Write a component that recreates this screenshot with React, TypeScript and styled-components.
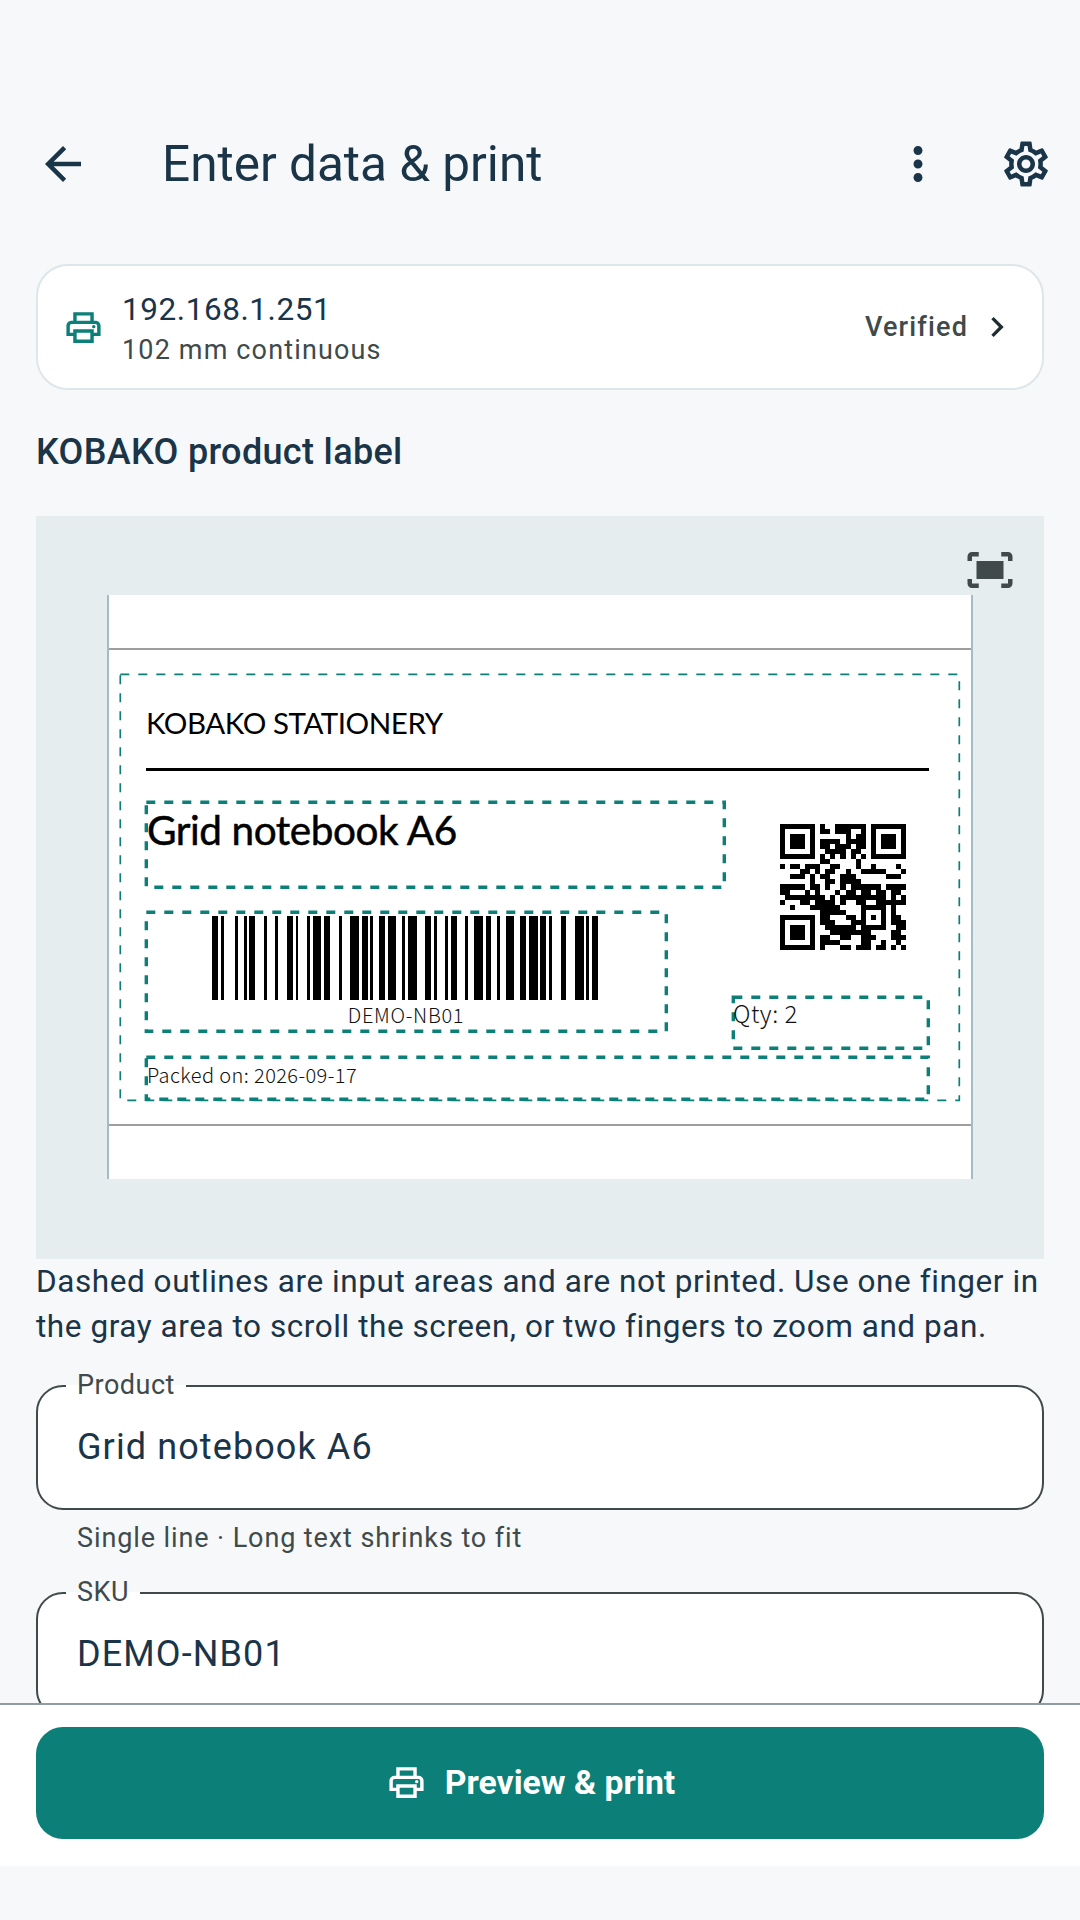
import styled, { createGlobalStyle } from 'styled-components'
import {
  MdArrowBack,
  MdChevronRight,
  MdFitScreen,
  MdMoreVert,
  MdOutlinePrint,
  MdOutlineSettings,
} from 'react-icons/md'

const GlobalStyle = createGlobalStyle`
  html, body {
    margin: 0;
    padding: 0;
    background: #f6f8fa;
  }
  * {
    box-sizing: border-box;
  }
`

// code 128 bar widths for "DEMO-NB01" (start A, data, check, stop)
const BARCODE = [
  '211412', '112313', '132113', '113123', '133121', '122132',
  '113321', '131123', '123122', '123221', '312113', '2331112',
]

const QR = [
  '1111111010011111101111111',
  '1000001011011100101000001',
  '1011101000000101101011101',
  '1011101011110111101011101',
  '1011101011011101101011101',
  '1000001001111011001000001',
  '1111111010101010101111111',
  '0000000011000001000000000',
  '1011011100110001001000010',
  '0000110101100100111110001',
  '0011101011001110000001110',
  '0000001001101111000000000',
  '1111101101001011111101111',
  '1100010100010110110110110',
  '0111111110101111111110101',
  '1000110111101001100111111',
  '0010001111110000111110100',
  '0000000011111000100010100',
  '1111111011000110101010110',
  '1000001011100011100010111',
  '1011101001111110111110011',
  '1011101000111111110000110',
  '1011101011001100111000111',
  '1000001011110000110010010',
  '1111111010001101110110101',
]

function Barcode() {
  let x = 0
  const bars: { x: number; w: number }[] = []
  BARCODE.join('')
    .split('')
    .forEach((digit, i) => {
      const w = Number(digit)
      if (i % 2 === 0) bars.push({ x, w })
      x += w
    })
  return (
    <BarcodeSvg viewBox={`0 0 ${x} 10`} preserveAspectRatio="none">
      {bars.map((bar) => (
        <rect key={bar.x} x={bar.x} y={0} width={bar.w} height={10} />
      ))}
    </BarcodeSvg>
  )
}

function QrCode() {
  return (
    <QrSvg viewBox="0 0 25 25">
      {QR.flatMap((row, y) =>
        row
          .split('')
          .map((cell, x) =>
            cell === '1' ? <rect key={`${x}-${y}`} x={x} y={y} width={1} height={1} /> : null,
          ),
      )}
    </QrSvg>
  )
}

function Zone({ x, y, w, h, thin, children }: { x: number; y: number; w: number; h: number; thin?: boolean; children?: React.ReactNode }) {
  return (
    <ZoneBox $x={x} $y={y} $w={w} $h={h}>
      <ZoneOutline width={w} height={h}>
        <rect x={0.3} y={0.3} width={w} height={h} strokeWidth={thin ? 1.7 : 3.4} />
      </ZoneOutline>
      {children}
    </ZoneBox>
  )
}

function Field({ label, value, helper }: { label: string; value: string; helper?: string }) {
  return (
    <FieldWrap>
      <FieldSet>
        <FieldLegend>{label}</FieldLegend>
        <FieldValue>{value}</FieldValue>
      </FieldSet>
      {helper && <FieldHelper>{helper}</FieldHelper>}
    </FieldWrap>
  )
}

export default function App() {
  return (
    <Screen>
      <GlobalStyle />
      <TopBar>
        <IconButton>
          <MdArrowBack />
        </IconButton>
        <Title>Enter data &amp; print</Title>
        <IconButton>
          <MdMoreVert />
        </IconButton>
        <IconButton>
          <MdOutlineSettings />
        </IconButton>
      </TopBar>

      <Content>
        <PrinterCard>
          <PrinterIcon>
            <MdOutlinePrint />
          </PrinterIcon>
          <PrinterInfo>
            <PrinterAddress>192.168.1.251</PrinterAddress>
            <PrinterMedia>102 mm continuous</PrinterMedia>
          </PrinterInfo>
          <PrinterStatus>Verified</PrinterStatus>
          <StatusChevron>
            <MdChevronRight />
          </StatusChevron>
        </PrinterCard>

        <SectionTitle>KOBAKO product label</SectionTitle>

        <PreviewPanel>
          <FitButton>
            <MdFitScreen />
          </FitButton>
          <LabelCanvas>
            <GuideLine $y={53} />
            <GuideLine $y={529} />
            <Zone x={11} y={79} w={839} h={426} thin />
            <Brand>KOBAKO STATIONERY</Brand>
            <BrandRule />
            <Zone x={37} y={207} w={578} h={85}>
              <ProductText>Grid notebook A6</ProductText>
            </Zone>
            <Zone x={37} y={317} w={520} h={119}>
              <Barcode />
              <BarcodeText>DEMO-NB01</BarcodeText>
            </Zone>
            <QrCode />
            <Zone x={624} y={402} w={195} h={51}>
              <QtyText>Qty: 2</QtyText>
            </Zone>
            <Zone x={37} y={462} w={782} h={42}>
              <SmallText>Packed on: 2026-09-17</SmallText>
            </Zone>
          </LabelCanvas>
        </PreviewPanel>

        <Hint>
          Dashed outlines are input areas and are not printed. Use one finger in the gray area to
          scroll the screen, or two fingers to zoom and pan.
        </Hint>

        <Field label="Product" value="Grid notebook A6" helper="Single line · Long text shrinks to fit" />
        <Field label="SKU" value="DEMO-NB01" />
      </Content>

      <BottomBar>
        <PrintButton>
          <MdOutlinePrint />
          Preview &amp; print
        </PrintButton>
      </BottomBar>
      <NavSpace />
    </Screen>
  )
}

const Screen = styled.div`
  width: 1080px;
  height: 1920px;
  display: flex;
  flex-direction: column;
  overflow: hidden;
  background: #f6f8fa;
  font-family: Roboto, 'Liberation Sans', sans-serif;
  color: #1a3448;
`
const TopBar = styled.header`
  height: 144px;
  margin-top: 92px;
  padding-left: 9px;
  display: flex;
  align-items: center;
  flex: none;
`
const IconButton = styled.div`
  width: 108px;
  height: 108px;
  flex: none;
  display: flex;
  align-items: center;
  justify-content: center;
  color: #1a3448;
  svg {
    width: 54px;
    height: 54px;
  }
`
const Title = styled.h1`
  flex: 1;
  margin: 0 0 0 45px;
  font-size: 49.5px;
  font-weight: 400;
  line-height: 63px;
`
const Content = styled.main`
  flex: 1;
  min-height: 0;
  overflow: hidden;
  padding: 28px 36px 0;
`
const PrinterCard = styled.div`
  height: 126px;
  display: flex;
  align-items: center;
  padding: 0 25px;
  background: #fff;
  border: 2px solid #dde6e9;
  border-radius: 32px;
`
const PrinterIcon = styled.div`
  width: 41px;
  height: 41px;
  margin-right: 18px;
  color: #0b7f78;
  svg {
    display: block;
    width: 41px;
    height: 41px;
  }
`
const PrinterInfo = styled.div`
  flex: 1;
  margin-top: 1px;
  display: flex;
  flex-direction: column;
`
const PrinterAddress = styled.div`
  font-size: 31.5px;
  line-height: 45px;
  letter-spacing: 0.56px;
`
const PrinterMedia = styled.div`
  font-size: 27px;
  font-weight: 450;
  line-height: 36px;
  letter-spacing: 1.15px;
  color: #404a4a;
`
const PrinterStatus = styled.span`
  font-size: 27px;
  font-weight: 470;
  letter-spacing: 1.15px;
  color: #404a4a;
`
const StatusChevron = styled.span`
  width: 40px;
  height: 40px;
  margin-left: 9px;
  color: #1f2c30;
  svg {
    display: block;
    width: 40px;
    height: 40px;
  }
`
const SectionTitle = styled.h2`
  margin: 35px 0 37px;
  font-size: 36px;
  font-weight: 500;
  line-height: 54px;
  letter-spacing: 0.34px;
`
const PreviewPanel = styled.section`
  position: relative;
  height: 743px;
  padding-top: 79px;
  display: flex;
  justify-content: center;
  background: #e5edee;
`
const FitButton = styled.div`
  position: absolute;
  top: 27px;
  right: 27px;
  width: 54px;
  height: 54px;
  color: #404a4a;
  svg {
    display: block;
    width: 54px;
    height: 54px;
  }
`
const LabelCanvas = styled.div`
  position: relative;
  width: 866px;
  height: 584px;
  background: #fff;
  border-left: 2px solid #a4bcc4;
  border-right: 2px solid #a4bcc4;
  font-family: 'Noto Sans CJK JP', 'Noto Sans', sans-serif;
  color: #000;
`
const GuideLine = styled.div<{ $y: number }>`
  position: absolute;
  left: 0;
  right: 0;
  top: ${(p) => p.$y}px;
  height: 2px;
  background: #9e9e9e;
`
const ZoneBox = styled.div<{ $x: number; $y: number; $w: number; $h: number }>`
  position: absolute;
  left: ${(p) => p.$x}px;
  top: ${(p) => p.$y}px;
  width: ${(p) => p.$w}px;
  height: ${(p) => p.$h}px;
`
const ZoneOutline = styled.svg`
  position: absolute;
  left: 0;
  top: 0;
  overflow: visible;
  rect {
    fill: none;
    stroke: #0b7f78;
    stroke-dasharray: 9 9;
  }
`
const Brand = styled.div`
  position: absolute;
  left: 37px;
  top: 106px;
  font-family: Lato, 'Noto Sans', sans-serif;
  font-size: 29.5px;
  line-height: 44px;
  letter-spacing: -0.45px;
  white-space: nowrap;
`
const BrandRule = styled.div`
  position: absolute;
  left: 37px;
  top: 173px;
  width: 783px;
  height: 3px;
  background: #000;
`
const ProductText = styled.div`
  position: relative;
  padding: 1px 0 0 1px;
  font-family: Lato, 'Noto Sans', sans-serif;
  font-size: 40.5px;
  line-height: 54px;
  letter-spacing: -0.45px;
  -webkit-text-stroke: 0.5px #000;
  white-space: nowrap;
`
const BarcodeSvg = styled.svg`
  position: absolute;
  left: 66px;
  top: 4px;
  width: 386px;
  height: 84px;
  shape-rendering: crispEdges;
`
const BarcodeText = styled.div`
  position: absolute;
  left: 0;
  right: 0;
  top: 90px;
  text-align: center;
  font-size: 20px;
  font-weight: 300;
  line-height: 26px;
  letter-spacing: 0.7px;
  color: #111;
`
const QrSvg = styled.svg`
  position: absolute;
  left: 671px;
  top: 229px;
  width: 126px;
  height: 126px;
  shape-rendering: crispEdges;
`
const SmallText = styled.div`
  position: relative;
  padding-left: 1px;
  font-size: 20px;
  font-weight: 300;
  line-height: 36px;
  letter-spacing: 0.4px;
  white-space: nowrap;
  color: #111;
`
const QtyText = styled(SmallText)`
  padding-left: 0;
  font-size: 24px;
  line-height: 32px;
  letter-spacing: 0.5px;
`
const Hint = styled.p`
  margin: 0;
  font-size: 31.5px;
  line-height: 45px;
  letter-spacing: 0.56px;
`
const FieldWrap = styled.div`
  margin-top: 20px;
`
const FieldSet = styled.fieldset`
  height: 141px;
  margin: 0;
  padding: 0 28px;
  background: #fff;
  border: 2px solid #404a4a;
  border-radius: 27px;
`
const FieldLegend = styled.legend`
  padding: 0 11px;
  font-size: 27px;
  line-height: 33px;
  letter-spacing: 0.5px;
  color: #404a4a;
`
const FieldValue = styled.div`
  padding: 18px 11px 0;
  font-size: 36px;
  line-height: 54px;
  letter-spacing: 1.1px;
`
const FieldHelper = styled.div`
  padding: 10px 41px 0;
  font-size: 27px;
  line-height: 36px;
  letter-spacing: 0.9px;
  color: #404a4a;
`
const BottomBar = styled.footer`
  flex: none;
  padding: 22px 36px 27px;
  background: #fff;
  border-top: 2px solid #8e9ca4;
`
const PrintButton = styled.button`
  width: 100%;
  height: 112px;
  padding: 0 19px 2px 0;
  display: flex;
  align-items: center;
  justify-content: center;
  gap: 18px;
  border: none;
  border-radius: 27px;
  background: #0b7f78;
  color: #fff;
  font-family: inherit;
  font-size: 33.75px;
  font-weight: 700;
  svg {
    width: 41px;
    height: 41px;
  }
`
const NavSpace = styled.div`
  flex: none;
  height: 54px;
`
